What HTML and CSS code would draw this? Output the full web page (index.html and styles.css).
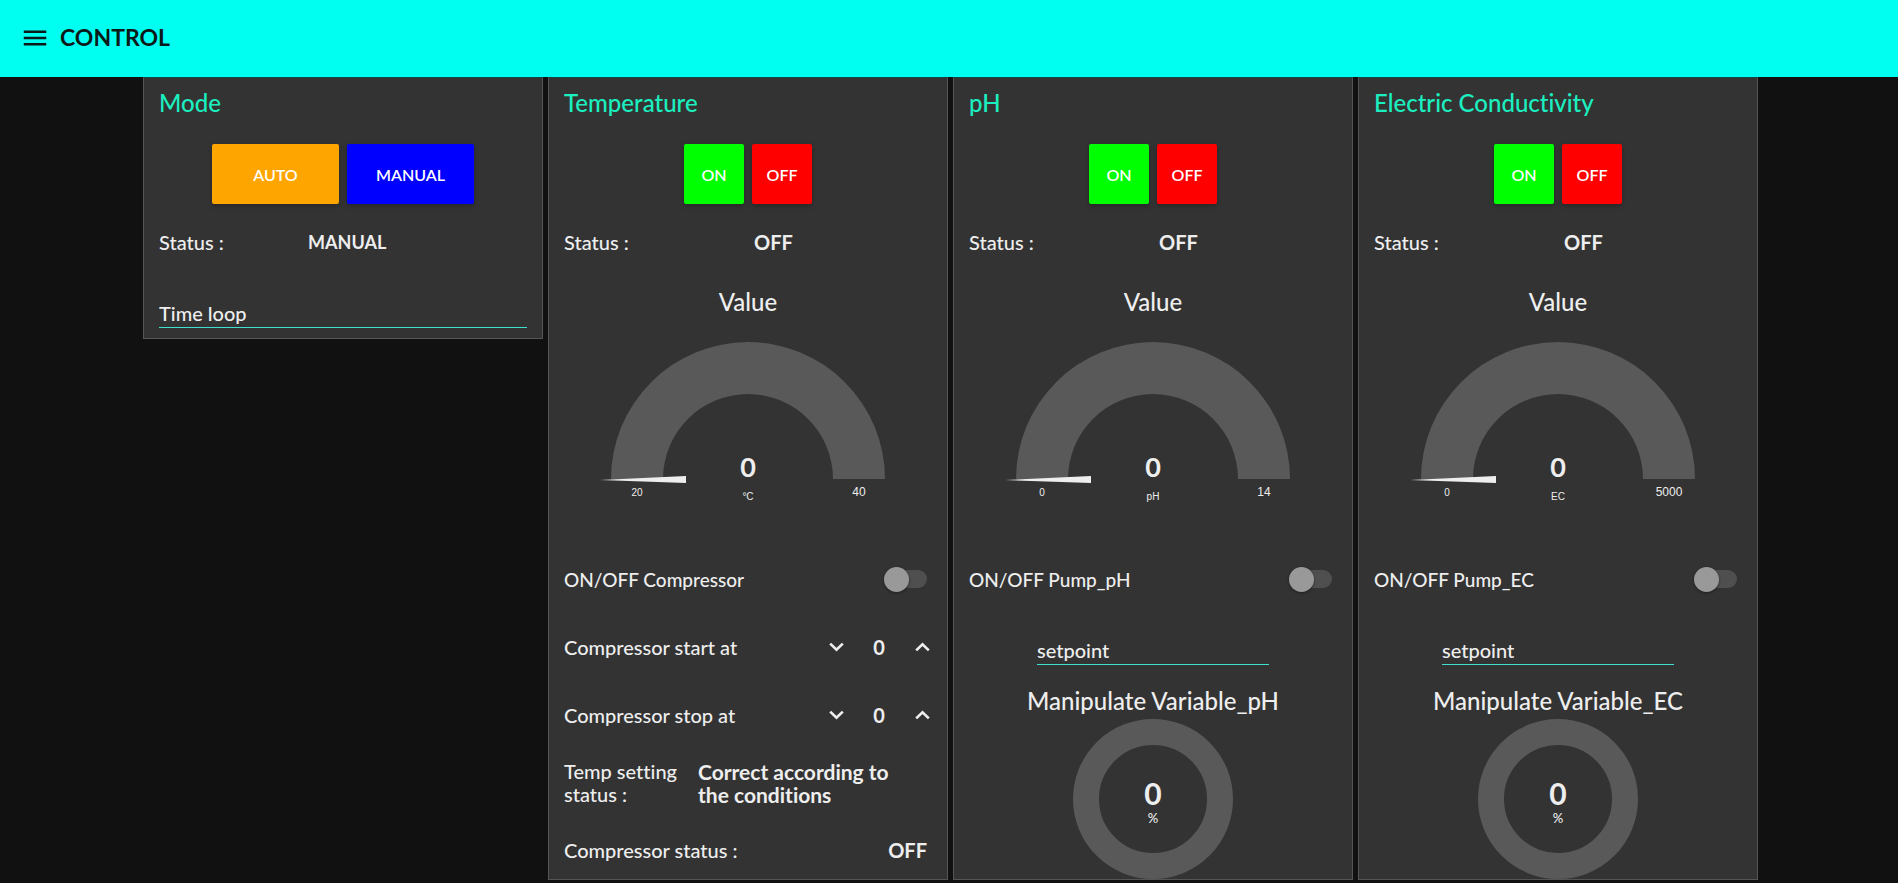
FILE: index.html
```html
<!DOCTYPE html>
<html lang="en">
<head>
<meta charset="utf-8">
<title>CONTROL</title>
<link rel="stylesheet" href="styles.css">
</head>
<body>
<header class="toolbar">
  <button class="menu-button" type="button" aria-label="Open menu">
    <svg class="menu-icon" viewBox="0 0 24 24" aria-hidden="true"><path d="M3 6h18v2H3zM3 11h18v2H3zM3 16h18v2H3z"/></svg>
  </button>
  <h1 class="toolbar-title">CONTROL</h1>
</header>
<main class="dashboard">
  <section class="card">
    <h2 class="card-title">Mode</h2>
    <div class="rows">
      <div class="row buttons">
        <button class="btn btn-wide btn-auto" type="button">AUTO</button>
        <button class="btn btn-wide btn-manual" type="button">MANUAL</button>
      </div>
      <div class="row status status-mode"><span>Status :</span><strong>MANUAL</strong></div>
      <div class="row field"><input class="text-input" type="text" placeholder="Time loop" aria-label="Time loop"></div>
    </div>
  </section>

  <section class="card">
    <h2 class="card-title">Temperature</h2>
    <div class="rows">
      <div class="row buttons">
        <button class="btn btn-on" type="button">ON</button>
        <button class="btn btn-off" type="button">OFF</button>
      </div>
      <div class="row status"><span>Status :</span><strong>OFF</strong></div>
      <div class="gauge">
        <h3 class="chart-title">Value</h3>
        <svg class="gauge-dial" viewBox="0 0 300 220" role="img" aria-label="Temperature value">
          <path class="arc" d="M13 159a137 137 0 0 1 274 0h-52a85 85 0 0 0-170 0z"/>
          <path class="needle" d="M2 160l86-4v7z"/>
          <text class="gauge-value" x="150" y="157">0</text>
          <text class="gauge-small" x="150" y="180">°C</text>
          <text class="gauge-small" x="39" y="176">20</text>
          <text class="gauge-max" x="261" y="176">40</text>
        </svg>
      </div>
      <div class="row toggle"><label for="compressor">ON/OFF Compressor</label><input class="switch" type="checkbox" id="compressor"></div>
      <div class="row stepper">
        <span>Compressor start at</span>
        <div class="stepper-controls">
          <button class="step" type="button" aria-label="Decrease start"><svg class="chevron" viewBox="0 0 15 10" aria-hidden="true"><path d="M1.2 1.6l6.3 6.2 6.3-6.2"/></svg></button>
          <output class="step-value">0</output>
          <button class="step" type="button" aria-label="Increase start"><svg class="chevron" viewBox="0 0 15 10" aria-hidden="true"><path d="M1.2 8.4l6.3-6.2 6.3 6.2"/></svg></button>
        </div>
      </div>
      <div class="row stepper">
        <span>Compressor stop at</span>
        <div class="stepper-controls">
          <button class="step" type="button" aria-label="Decrease stop"><svg class="chevron" viewBox="0 0 15 10" aria-hidden="true"><path d="M1.2 1.6l6.3 6.2 6.3-6.2"/></svg></button>
          <output class="step-value">0</output>
          <button class="step" type="button" aria-label="Increase stop"><svg class="chevron" viewBox="0 0 15 10" aria-hidden="true"><path d="M1.2 8.4l6.3-6.2 6.3 6.2"/></svg></button>
        </div>
      </div>
      <div class="row status status-setting"><span>Temp setting status :</span><strong>Correct according to the conditions</strong></div>
      <div class="row status-spread"><span>Compressor status :</span><strong>OFF</strong></div>
    </div>
  </section>

  <section class="card">
    <h2 class="card-title">pH</h2>
    <div class="rows">
      <div class="row buttons">
        <button class="btn btn-on" type="button">ON</button>
        <button class="btn btn-off" type="button">OFF</button>
      </div>
      <div class="row status"><span>Status :</span><strong>OFF</strong></div>
      <div class="gauge">
        <h3 class="chart-title">Value</h3>
        <svg class="gauge-dial" viewBox="0 0 300 220" role="img" aria-label="pH value">
          <path class="arc" d="M13 159a137 137 0 0 1 274 0h-52a85 85 0 0 0-170 0z"/>
          <path class="needle" d="M2 160l86-4v7z"/>
          <text class="gauge-value" x="150" y="157">0</text>
          <text class="gauge-small" x="150" y="180">pH</text>
          <text class="gauge-small" x="39" y="176">0</text>
          <text class="gauge-max" x="261" y="176">14</text>
        </svg>
      </div>
      <div class="row toggle"><label for="pump-ph">ON/OFF Pump_pH</label><input class="switch" type="checkbox" id="pump-ph"></div>
      <div class="row field field-narrow"><input class="text-input" type="text" placeholder="setpoint" aria-label="pH setpoint"></div>
      <div class="donut">
        <h3 class="chart-title">Manipulate Variable_pH</h3>
        <svg class="donut-dial" viewBox="0 0 160 160" role="img" aria-label="Manipulate Variable pH">
          <circle class="ring" cx="80" cy="80" r="67"/>
          <text class="donut-value" x="80" y="86">0</text>
          <text class="donut-unit" x="80" y="104">%</text>
        </svg>
      </div>
    </div>
  </section>

  <section class="card">
    <h2 class="card-title">Electric Conductivity</h2>
    <div class="rows">
      <div class="row buttons">
        <button class="btn btn-on" type="button">ON</button>
        <button class="btn btn-off" type="button">OFF</button>
      </div>
      <div class="row status"><span>Status :</span><strong>OFF</strong></div>
      <div class="gauge">
        <h3 class="chart-title">Value</h3>
        <svg class="gauge-dial" viewBox="0 0 300 220" role="img" aria-label="Electric conductivity value">
          <path class="arc" d="M13 159a137 137 0 0 1 274 0h-52a85 85 0 0 0-170 0z"/>
          <path class="needle" d="M2 160l86-4v7z"/>
          <text class="gauge-value" x="150" y="157">0</text>
          <text class="gauge-small" x="150" y="180">EC</text>
          <text class="gauge-small" x="39" y="176">0</text>
          <text class="gauge-max" x="261" y="176">5000</text>
        </svg>
      </div>
      <div class="row toggle"><label for="pump-ec">ON/OFF Pump_EC</label><input class="switch" type="checkbox" id="pump-ec"></div>
      <div class="row field field-narrow"><input class="text-input" type="text" placeholder="setpoint" aria-label="EC setpoint"></div>
      <div class="donut">
        <h3 class="chart-title">Manipulate Variable_EC</h3>
        <svg class="donut-dial" viewBox="0 0 160 160" role="img" aria-label="Manipulate Variable EC">
          <circle class="ring" cx="80" cy="80" r="67"/>
          <text class="donut-value" x="80" y="86">0</text>
          <text class="donut-unit" x="80" y="104">%</text>
        </svg>
      </div>
    </div>
  </section>
</main>
</body>
</html>
```
FILE: styles.css
```css
* {
  box-sizing: border-box;
}

body {
  margin: 0;
  background: #111;
  color: #eee;
  font-family: "Trebuchet MS", Lato, "Open Sans", sans-serif;
  font-size: 20px;
  font-weight: 500;
  line-height: 23px;
  font-variant-ligatures: none;
}

button,
input {
  font: inherit;
  color: inherit;
}

/* Toolbar */
.toolbar {
  display: flex;
  align-items: center;
  gap: 10px;
  height: 77px;
  padding: 0 20px 3px;
  background: #00fff0;
  color: #0b1a19;
}

.menu-button {
  display: flex;
  padding: 2px 0 0;
  border: 0;
  background: none;
}

.menu-icon {
  width: 30px;
  height: 30px;
  fill: currentColor;
}

.toolbar-title {
  margin: 0;
  font-size: 23px;
  font-weight: 700;
  line-height: 30px;
}

/* Cards */
.dashboard {
  display: flex;
  flex-wrap: wrap;
  justify-content: center;
  align-items: flex-start;
  gap: 5px;
  padding-left: 3px;
}

.card {
  width: 400px;
  padding: 0 15px;
  border: 1px solid #555;
  border-top-color: #184444;
  background: #333;
}

.card-title {
  margin: 0;
  padding: 10px 0 27px;
  color: #1befc0;
  font-size: 24px;
  font-weight: 500;
  line-height: 29px;
}

.rows {
  display: grid;
  gap: 8px;
}

.row {
  display: flex;
  align-items: center;
  min-height: 60px;
}

/* Buttons */
.buttons {
  justify-content: center;
  gap: 8px;
}

.btn {
  width: 60px;
  height: 60px;
  padding: 0;
  border: 0;
  border-radius: 2px;
  color: #fff;
  font-size: 16px;
  font-weight: 600;
  box-shadow: 0 2px 5px rgba(0, 0, 0, 0.26);
}

.btn-wide {
  width: 127px;
}

.btn-auto {
  background: #ffa500;
}

.btn-manual {
  background: #00f;
}

.btn-on {
  background: #0f0;
}

.btn-off {
  background: #f00;
}

/* Status rows */
.status {
  display: grid;
  grid-template-columns: 190px 1fr;
}

.status-mode {
  grid-template-columns: 149px 1fr;
}

.status-mode strong {
  font-size: 18px;
}

.status-setting {
  grid-template-columns: 134px 210px;
}

.status-setting strong {
  font-size: 21px;
}

.status-spread {
  justify-content: space-between;
  min-height: 58px;
  padding-right: 5px;
}

/* Text fields */
.field {
  align-items: flex-start;
  padding-top: 18px;
}

.field:last-child {
  min-height: 58px;
}

.field-narrow {
  padding-left: 68px;
  padding-right: 68px;
}

.text-input {
  width: 100%;
  height: 30px;
  padding: 0;
  border: 0;
  border-bottom: 1px solid #40e0d0;
  outline: 0;
  background: none;
}

.text-input::placeholder {
  color: #eee;
  opacity: 1;
}

/* Charts */
.gauge,
.donut {
  display: flex;
  flex-direction: column;
  align-items: center;
}

.gauge {
  padding: 8px 0 1px;
}

.donut {
  padding-top: 2px;
}

.chart-title {
  margin: 0 0 4px;
  font-size: 24px;
  font-weight: 500;
  line-height: 28px;
}

.gauge-dial {
  width: 300px;
  height: 220px;
}

.donut-dial {
  width: 160px;
  height: 160px;
}

.arc {
  fill: #595959;
}

.needle {
  fill: #eee;
}

.ring {
  fill: none;
  stroke: #595959;
  stroke-width: 26px;
}

.gauge-dial text,
.donut-dial text {
  fill: #eee;
  text-anchor: middle;
}

.gauge-value {
  font-size: 27px;
  font-weight: 700;
}

.gauge-small {
  font-family: "Liberation Sans", Arial, sans-serif;
  font-size: 10px;
  font-weight: 400;
}

.gauge-max {
  font-family: "Liberation Sans", Arial, sans-serif;
  font-size: 12px;
  font-weight: 400;
}

.donut-value {
  font-size: 30px;
  font-weight: 700;
}

.donut-unit {
  font-size: 13px;
}

/* Switch */
.toggle {
  justify-content: space-between;
  padding-right: 5px;
  font-size: 19px;
}

.switch {
  display: flex;
  align-items: center;
  width: 43px;
  height: 18px;
  margin: 0;
  appearance: none;
  border-radius: 9px;
  background: #4f4f4f;
}

.switch::before {
  content: "";
  flex: none;
  width: 25px;
  height: 25px;
  border-radius: 50%;
  background: #999;
  box-shadow: 0 1px 3px rgba(0, 0, 0, 0.4);
}

/* Stepper */
.stepper {
  justify-content: space-between;
}

.stepper-controls {
  display: flex;
  align-items: center;
}

.step {
  display: flex;
  align-items: center;
  justify-content: center;
  width: 20px;
  height: 30px;
  padding: 0;
  border: 0;
  background: none;
}

.chevron {
  width: 15px;
  height: 10px;
  fill: none;
  stroke: #eee;
  stroke-width: 2.6px;
}

.step-value {
  width: 66px;
  font-weight: 700;
  text-align: center;
}
```
